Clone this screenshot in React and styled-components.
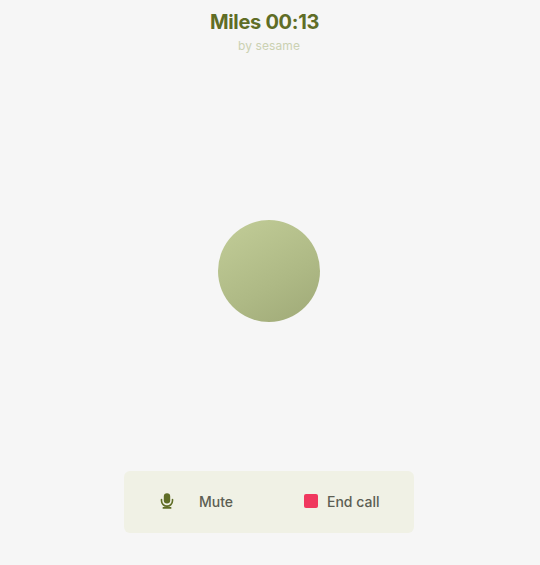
import React from "react";
import styled, { createGlobalStyle } from "styled-components";

const Global = createGlobalStyle`
  html, body {
    margin: 0;
    padding: 0;
    background: #f6f6f6;
  }
`;

const Page = styled.div`
  width: 540px;
  height: 565px;
  box-sizing: border-box;
  padding: 9px 2px 0 0;
  display: flex;
  flex-direction: column;
  align-items: center;
  font-family: Inter, "Liberation Sans", sans-serif;
  overflow: hidden;
`;

const Title = styled.h1`
  margin: 0 9px 0 0;
  height: 26px;
  font-size: 20px;
  line-height: 26px;
  font-weight: 700;
  color: #5f6d26;
  letter-spacing: -0.3px;
`;

const Byline = styled.div`
  margin-top: 3px;
  height: 16px;
  font-size: 12px;
  line-height: 16px;
  letter-spacing: 0.1px;
  color: #cbd1b2;
`;

const Stage = styled.div`
  flex: 1;
  display: flex;
  align-items: center;
  justify-content: center;
  padding: 18px 0 1px;
`;

const Orb = styled.div`
  width: 102px;
  height: 102px;
  border-radius: 50%;
  background: linear-gradient(150deg, #bfca95 10%, #aeb985 60%, #9fa977 100%);
`;

const Bar = styled.div`
  width: 290px;
  height: 62px;
  margin-bottom: 32px;
  display: flex;
  align-items: center;
  box-sizing: border-box;
  padding-left: 36px;
  background: #f0f1e5;
  border-radius: 6px;
`;

const Control = styled.button`
  display: flex;
  align-items: center;
  gap: ${(p) => p.$gap}px;
  width: ${(p) => p.$width}px;
  padding: 0 0 2px;
  border: 0;
  background: none;
  font: inherit;
  font-size: 14px;
  font-weight: 500;
  color: #5c5e53;
`;

const StopIcon = styled.span`
  width: 14px;
  height: 14px;
  border-radius: 2px;
  background: #f0385e;
`;

const MicIcon = () => (
  <svg width="14" height="16" viewBox="0 0 14 16" fill="#5f6d26">
    <rect x="3.8" y="0.3" width="6.4" height="10.2" rx="3.2" />
    <path d="M1.5 6.5v1.2a5.5 5.5 0 0 0 11 0V6.5" fill="none" stroke="#5f6d26" strokeWidth="1.6" strokeLinecap="round" />
    <rect x="6.2" y="12.5" width="1.6" height="2" />
    <rect x="2.6" y="14" width="8.8" height="1.7" rx="0.5" />
  </svg>
);

export default function App() {
  return (
    <Page>
      <Global />
      <Title>Miles 00:13</Title>
      <Byline>by sesame</Byline>
      <Stage>
        <Orb />
      </Stage>
      <Bar>
        <Control $gap={25} $width={144}>
          <MicIcon />
          Mute
        </Control>
        <Control $gap={9} $width={90}>
          <StopIcon />
          End call
        </Control>
      </Bar>
    </Page>
  );
}
